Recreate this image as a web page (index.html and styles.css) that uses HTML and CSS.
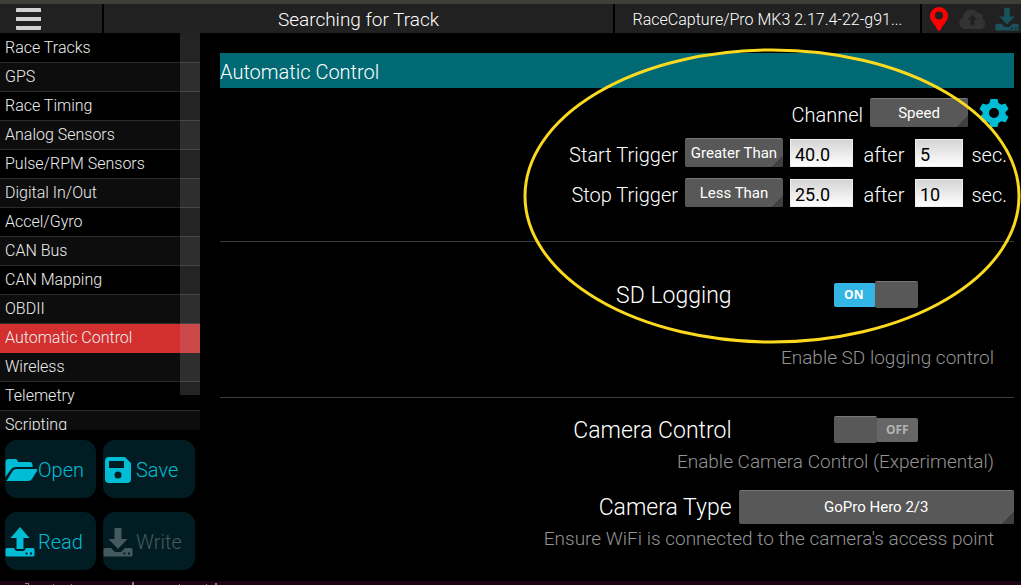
FILE: index.html
```html
<!DOCTYPE html>
<html lang="en">
<head>
<meta charset="utf-8">
<title>RaceCapture</title>
<link rel="stylesheet" href="styles.css">
</head>
<body>
<svg class="defs" aria-hidden="true">
  <symbol id="drive-down" viewBox="0 0 30 30"><path d="M11.500 1h7v11h6L15 22 5.500 12h6z"/><path d="M2 21h6l4 4h6l4-4h6q1.500 0 1.500 1.500v5.500q0 1.500-1.500 1.500H2Q.5 29.500.5 28v-5.500Q.5 21 2 21zM20.500 25.500v2h2v-2zm4.500 0v2h2v-2z" fill-rule="evenodd"/></symbol>
</svg>
<header class="topbar">
  <div class="cell menu-cell"><button class="menu" aria-label="Menu"><svg viewBox="0 0 26 22"><path d="M1 0h23a1 1 0 0 1 1 1v3H0V1a1 1 0 0 1 1-1zM0 9h25v4H0zM0 18h25v3a1 1 0 0 1-1 1H1a1 1 0 0 1-1-1z"/></svg></button></div>
  <div class="cell track">Searching for Track</div>
  <div class="cell device">RaceCapture/Pro MK3 2.17.4-22-g91...</div>
  <div class="cell status">
    <svg class="pin" viewBox="0 0 18 24"><path fill-rule="evenodd" d="M9 0a9 9 0 0 1 9 9c0 5-5 8-7.500 14q-1.500 2-3 0C5 17 0 14 0 9a9 9 0 0 1 9-9zm0 4.500a4 4 0 1 0 0 8 4 4 0 0 0 0-8z"/></svg>
    <svg class="cloud" viewBox="0 0 28 20"><path fill-rule="evenodd" d="M6 20a6 6 0 0 1-2-11.500A8 8 0 0 1 18.500 4a4.500 4.500 0 0 1 5 6A5.500 5.500 0 0 1 22 20zM13.500 5.500 8.500 11h3v5.500h4V11h3z"/></svg>
    <svg class="down"><use href="#drive-down"/></svg>
  </div>
</header>
<div class="body">
  <aside class="side">
    <nav class="list">
      <a href="#">Race Tracks</a><a href="#">GPS</a><a href="#">Race Timing</a><a href="#">Analog Sensors</a><a href="#">Pulse/RPM Sensors</a><a href="#">Digital In/Out</a><a href="#">Accel/Gyro</a><a href="#">CAN Bus</a><a href="#">CAN Mapping</a><a href="#">OBDII</a><a href="#" class="active" aria-current="page">Automatic Control</a><a href="#">Wireless</a><a href="#">Telemetry</a><a href="#">Scripting</a>
      <span class="scroll"></span>
    </nav>
    <div class="actions">
      <button><svg class="folder" viewBox="0 0 32 30"><path d="M0 22V7q0-3 3-3h7q2 0 2.500 3H24q3 0 3 3v2H10q-3 0-5 3z"/><path d="M1 26l5.500-9q1.500-3 4.500-3h20q1.500 0 .5 2l-5 8q-1.500 2-4 2z"/></svg>Open</button>
      <button><svg class="floppy" viewBox="0 0 30 30"><path fill-rule="evenodd" d="M6 2h16l6 6v16q0 4-4 4H6q-4 0-4-4V6q0-4 4-4zm0 4v7h15V6zm9 10.500a3.500 3.500 0 1 0 0 7 3.500 3.500 0 0 0 0-7z"/></svg>Save</button>
      <button><svg viewBox="0 0 30 30"><path d="M15 0l9.500 11h-6v11h-7V11h-6z"/><path fill-rule="evenodd" d="M2 21h7q1 3 3 3h6q2 0 3-3h7q1.500 0 1.500 1.500v5.500q0 1.500-1.500 1.500H2Q.5 29.500.5 28v-5.500Q.5 21 2 21zM20.500 25.500v2h2v-2zm4.500 0v2h2v-2z"/></svg>Read</button>
      <button disabled><svg><use href="#drive-down"/></svg>Write</button>
    </div>
  </aside>
  <main class="main">
    <h1>Automatic Control</h1>
    <section class="triggers">
      <div class="row"><label for="channel">Channel</label><button id="channel" class="drop">Speed</button>
        <button class="gear" aria-label="Channel settings"><svg viewBox="-15 -15 30 30"><path fill-rule="evenodd" d="M-3.500-14h7l1 4 3 1.700 4-1.200L14.500-4l-3 3v2l3 3-3 5.500-4-1.200-3 1.700-1 4h-7l-1-4-3-1.700-4 1.200L-14.500 4l3-3v-2l-3-3 3-5.500 4 1.200 3-1.700zM0-5A5 5 0 1 0 0 5 5 5 0 0 0 0-5z"/></svg></button></div>
      <div class="row"><label for="start">Start Trigger</label><button id="start" class="drop">Greater Than</button><input class="value" aria-label="Start value" value="40.0"><label class="after" for="start-delay">after</label><input id="start-delay" class="delay" value="5"><span class="unit">sec.</span></div>
      <div class="row"><label for="stop">Stop Trigger</label><button id="stop" class="drop">Less Than</button><input class="value" aria-label="Stop value" value="25.0"><label class="after" for="stop-delay">after</label><input id="stop-delay" class="delay" value="10"><span class="unit">sec.</span></div>
    </section>
    <section class="logging">
      <div class="setting"><label for="sd">SD Logging</label><span class="switch"><input id="sd" type="checkbox" role="switch" checked><span class="on">ON</span><span class="off">OFF</span></span></div>
      <p>Enable SD logging control</p>
    </section>
    <section class="camera">
      <div class="setting"><label for="cam">Camera Control</label><span class="switch"><input id="cam" type="checkbox" role="switch"><span class="on">ON</span><span class="off">OFF</span></span></div>
      <p>Enable Camera Control (Experimental)</p>
      <div class="setting type"><label for="camtype">Camera Type</label><button id="camtype" class="drop">GoPro Hero 2/3</button></div>
      <p>Ensure WiFi is connected to the camera's access point</p>
    </section>
    <svg class="highlight" viewBox="0 0 498 296" preserveAspectRatio="none"><ellipse cx="249" cy="148" rx="247" ry="146"/></svg>
  </main>
</div>
<footer class="desktop-edge"><svg viewBox="0 0 260 4"><path d="M25 2h4v2h-1V3h-3zM53 3h1v1h-1zM71 3h1v1h-1zM132 1h2v3h-2zM179 3h1v1h-1zM206 3h1v1h-1zM215 2h2v2h-2z"/></svg></footer>
</body>
</html>
```
FILE: styles.css
```css
* { box-sizing: border-box; }
body { margin: 0; height: 100vh; min-height: 480px; display: flex; flex-direction: column; overflow: hidden; background: #000; color: #fff; border-top: 4px solid #3f3e37; font: 300 20px/28px Roboto, sans-serif; }
button, input { font: inherit; color: inherit; border: 0; margin: 0; padding: 0; background: none; border-radius: 0; }
svg { fill: currentColor; display: block; flex: none; }
.defs { width: 0; height: 0; position: absolute; }

.topbar { display: grid; grid-template-columns: 102px 1fr 305px 99px; gap: 2px; height: 29px; flex: none; }
.cell { background: #212121; display: flex; align-items: center; justify-content: center; overflow: hidden; white-space: nowrap; }
.menu-cell { justify-content: flex-start; padding-left: 16px; }
.menu { color: #d2d2d2; }
.menu svg { width: 26px; height: 22px; }
.track { font-size: 19px; padding-top: 3px; }
.device { font-size: 16px; padding-top: 3px; }
.status { justify-content: flex-start; padding-left: 8px; gap: 11px; }
.pin { width: 18px; height: 24px; color: #f00; }
.cloud { width: 28px; height: 20px; color: #333; }
.down { width: 24px; height: 24px; color: #1a525c; margin-left: -3px; }

.body { flex: 1; min-height: 0; display: flex; }
.side { width: 200px; flex: none; display: flex; flex-direction: column; }
.list { position: relative; flex: 1 1 0; min-height: 0; overflow: hidden; font-size: 16px; padding-top: 1px; }
.list a { display: block; height: 29px; padding-left: 5px; line-height: 28px; color: #eee; text-decoration: none; border-bottom: 1px solid #2b2b2b; }
.list a:nth-of-type(even) { background: #0d0d0d; }
.list a.active { background: #d32f2f; border-color: #d32f2f; }
.scroll { position: absolute; top: 0; right: 0; width: 20px; height: 362px; background: rgba(180, 180, 180, .2); }
.actions { display: grid; grid-template-columns: 91px 92px; grid-auto-rows: 58px; gap: 14px 7px; padding: 10px 5px 11px; }
.actions button { display: flex; align-items: center; gap: 3px; border-radius: 12px; background: #011c22; color: #00bcd4; padding-top: 2px; }
.actions svg { width: 30px; height: 30px; }
.actions .folder { width: 33px; margin-right: -3px; }
.actions button:disabled { color: #455a5e; }

.main { position: relative; flex: 1; min-width: 0; padding: 20px 7px 0 20px; }
h1 { margin: 0 0 10px; background: #006974; font: inherit; line-height: 35px; padding-top: 2px; height: 35px; }
.triggers { height: 144px; display: flex; flex-direction: column; gap: 11px; border-bottom: 1px solid #3c3c3c; }
.row { display: flex; justify-content: flex-end; align-items: center; height: 29px; padding-right: 7px; }
.row label { padding-top: 5px; }
.drop { width: 98px; height: 29px; margin-left: 7px; font-size: 15px; font-weight: 400; line-height: 28px; border-top: 1px solid #777; border-radius: 2px; background: linear-gradient(135deg, transparent calc(100% - 8px), #404040 calc(100% - 8px)), #585858; white-space: nowrap; }
.gear { margin-left: 11px; margin-right: -2px; color: #00bcd4; }
.gear svg { width: 30px; height: 30px; }
.row input { height: 28px; padding: 5px 4px 0; background: linear-gradient(#d4d4d4, #fff); color: #000; font-size: 18px; font-weight: 400; border: 1px solid #eee; }
.value { width: 63px; margin-left: 7px; }
.delay { width: 48px; }
.after { width: 62px; text-align: center; }
.unit { width: 44px; text-align: right; padding-top: 5px; }
.logging { height: 156px; padding-top: 35px; border-bottom: 1px solid #3c3c3c; }
.setting { display: grid; grid-template-columns: 65fr 35fr; column-gap: 7px; align-items: center; }
.setting label { text-align: right; font-size: 23px; line-height: 32px; padding-top: 3px; }
.switch { position: relative; justify-self: center; width: 84px; height: 27px; display: grid; grid-template-columns: 42px 42px; align-items: center; font: 700 12px/24px "Open Sans", sans-serif; text-align: center; }
.switch input { appearance: none; position: absolute; left: 0; top: 0; width: 43px; height: 27px; background: #585858; border-top: 1px solid #777; border-radius: 2px; }
.switch input:checked { left: auto; right: 0; }
.on { background: #33b5e5; border-radius: 2px; padding-right: 3px; }
.off { background: #666; color: #b4b4b4; border-radius: 2px; }
.switch input:checked ~ .off, .switch input:not(:checked) ~ .on { visibility: hidden; }
p { margin: 0; padding-right: 20px; text-align: right; font-size: 19px; color: #949494; }
.logging p { padding-top: 32px; }
.camera { padding-top: 14px; }
.type { margin-top: 13px; }
.camera p { padding-top: 1px; }
.type .drop { width: auto; height: 34px; margin: 0; background: linear-gradient(135deg, transparent calc(100% - 9px), #404040 calc(100% - 9px)), #585858; }
.highlight { position: absolute; right: 0; top: 15px; width: 498px; height: 296px; pointer-events: none; }
.highlight ellipse { fill: none; stroke: #fad91f; stroke-width: 3; }
.desktop-edge { height: 4px; flex: none; background: #1f0514; color: #858085; }
.desktop-edge svg { width: 260px; height: 4px; }
```
